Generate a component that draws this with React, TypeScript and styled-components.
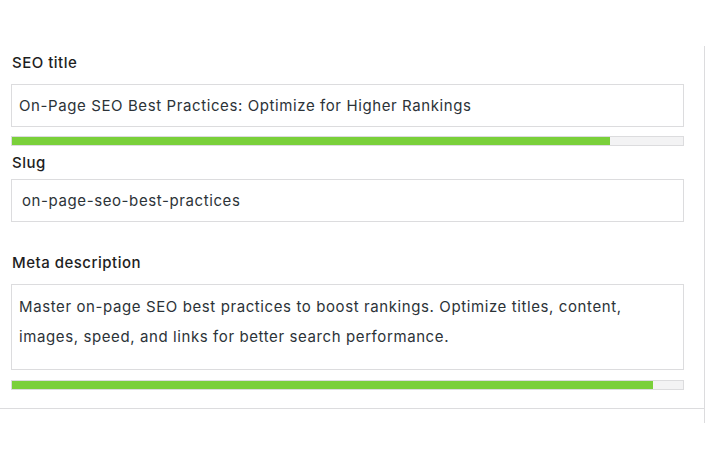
import * as React from 'react';
import styled, { createGlobalStyle } from 'styled-components';

const GlobalStyle = createGlobalStyle`
  html, body {
    margin: 0;
    padding: 0;
    background: #ffffff;
  }
  body {
    font-family: Inter, "Noto Sans", "Liberation Sans", sans-serif;
    color: #2c3338;
  }
`;

const Page = styled.div`
  width: 705px;
  height: 476px;
  padding-top: 46px;
  box-sizing: border-box;
  background: #ffffff;
`;

const Column = styled.div`
  width: 705px;
  height: 377px;
  box-sizing: border-box;
  border-right: 1px solid #dcdcde;
`;

const Section = styled.section`
  display: flex;
  flex-direction: column;
  padding: 7px 20px 18px 11px;
  border-bottom: 1px solid #dcdcde;
`;

const Field = styled.div<{ $gap?: number }>`
  display: flex;
  flex-direction: column;
  margin-top: ${(p) => p.$gap ?? 0}px;
`;

const Label = styled.label<{ $space: number }>`
  display: block;
  font-size: 15px;
  line-height: 20px;
  font-weight: 450;
  letter-spacing: 0.5px;
  color: #1e1e1e;
  padding-left: 1px;
  margin-bottom: ${(p) => p.$space}px;
`;

const Input = styled.div<{ $pad: number }>`
  height: 43px;
  box-sizing: border-box;
  display: flex;
  align-items: center;
  padding-left: ${(p) => p.$pad}px;
  border: 1px solid #dcdcde;
  font-size: 15px;
  letter-spacing: 0.6px;
  color: #2c3338;
  white-space: nowrap;
`;

const TextArea = styled.div`
  height: 86px;
  box-sizing: border-box;
  padding: 7px 12px 0 7px;
  border: 1px solid #dcdcde;
  font-size: 15px;
  letter-spacing: 0.6px;
  line-height: 30px;
  color: #2c3338;
`;

const Track = styled.div<{ $top: number }>`
  height: 10px;
  box-sizing: border-box;
  margin-top: ${(p) => p.$top}px;
  border: 1px solid #dcdcde;
  background: #f3f3f4;
`;

const Fill = styled.div`
  height: 100%;
  background: #7ad03a;
`;

const Progress = ({ value, top }: { value: number; top: number }) => (
  <Track $top={top}>
    <Fill style={{ width: `${value}%` }} />
  </Track>
);

export default function App() {
  return (
    <>
      <GlobalStyle />
      <Page>
        <Column>
          <Section>
            <Field>
              <Label $space={11}>SEO title</Label>
              <Input $pad={7}>
                On-Page SEO Best Practices: Optimize for Higher Rankings
              </Input>
              <Progress value={89.1} top={9} />
            </Field>
            <Field $gap={7}>
              <Label $space={6}>Slug</Label>
              <Input $pad={10}>on-page-seo-best-practices</Input>
            </Field>
            <Field $gap={31}>
              <Label $space={11}>Meta description</Label>
              <TextArea>
                Master on-page SEO best practices to boost rankings. Optimize
                titles, content, images, speed, and links for better search
                performance.
              </TextArea>
              <Progress value={95.5} top={10} />
            </Field>
          </Section>
        </Column>
      </Page>
    </>
  );
}
